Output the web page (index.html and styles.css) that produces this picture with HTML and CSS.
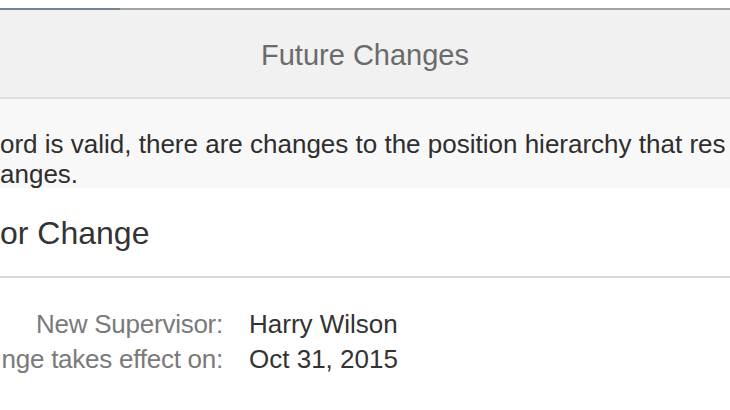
FILE: index.html
```html
<!DOCTYPE html>
<html lang="en">
<head>
<meta charset="utf-8">
<title>Future Changes</title>
<link rel="stylesheet" href="styles.css">
</head>
<body>
<div class="page">
  <div class="tabline">
    <div class="tabline-active"></div>
    <div class="tabline-rest"></div>
  </div>
  <header class="dialog-head">
    <h1 class="dialog-title">Future Changes</h1>
  </header>
  <div class="notice">
    <p class="notice-line">ord is valid, there are changes to the position hierarchy that res</p>
    <p class="notice-line">anges.</p>
  </div>
  <section class="change">
    <h2 class="change-title">or Change</h2>
    <div class="change-rule"></div>
    <div class="fields">
      <div class="field">
        <div class="field-label">New Supervisor:</div>
        <div class="field-value">Harry Wilson</div>
      </div>
      <div class="field">
        <div class="field-label">nge takes effect on:</div>
        <div class="field-value">Oct 31, 2015</div>
      </div>
    </div>
  </section>
</div>
</body>
</html>
```

FILE: styles.css
```css
html, body {
  margin: 0;
  padding: 0;
  background: #ffffff;
}

body {
  font-family: "Liberation Sans", Arial, sans-serif;
  width: 730px;
  height: 410px;
  overflow: hidden;
}

.page {
  padding-top: 8px;
}

.tabline {
  display: flex;
  height: 2px;
}

.tabline-active {
  width: 120px;
  background: #71868f;
}

.tabline-rest {
  flex: 1;
  background: #a2a2a2;
}

.dialog-head {
  height: 87px;
  background: #f1f1f1;
  border-bottom: 2px solid #dcdcdc;
  display: flex;
  align-items: center;
  justify-content: center;
}

.dialog-title {
  margin: 0 0 -2px;
  font-size: 29px;
  font-weight: normal;
  color: #6b6b6b;
  line-height: 34px;
}

.notice {
  box-sizing: border-box;
  height: 89px;
  padding-top: 31px;
  background: #f8f8f8;
  overflow: hidden;
}

.notice-line {
  margin: 0;
  font-size: 26px;
  line-height: 29.5px;
  color: #2e2e2e;
  white-space: nowrap;
}

.change {
  padding-top: 27px;
}

.change-title {
  margin: 0;
  font-size: 32px;
  font-weight: normal;
  line-height: 37px;
  color: #333333;
}

.change-rule {
  margin-top: 24px;
  height: 2px;
  background: #d8d8d8;
}

.fields {
  padding-top: 29px;
  display: flex;
  flex-direction: column;
}

.field {
  display: flex;
  gap: 26px;
  font-size: 26px;
  line-height: 35px;
  white-space: nowrap;
}

.field-label {
  width: 223px;
  flex: none;
  text-align: right;
  letter-spacing: -0.25px;
  color: #7a7a7a;
}

.field-value {
  color: #333333;
}
```
